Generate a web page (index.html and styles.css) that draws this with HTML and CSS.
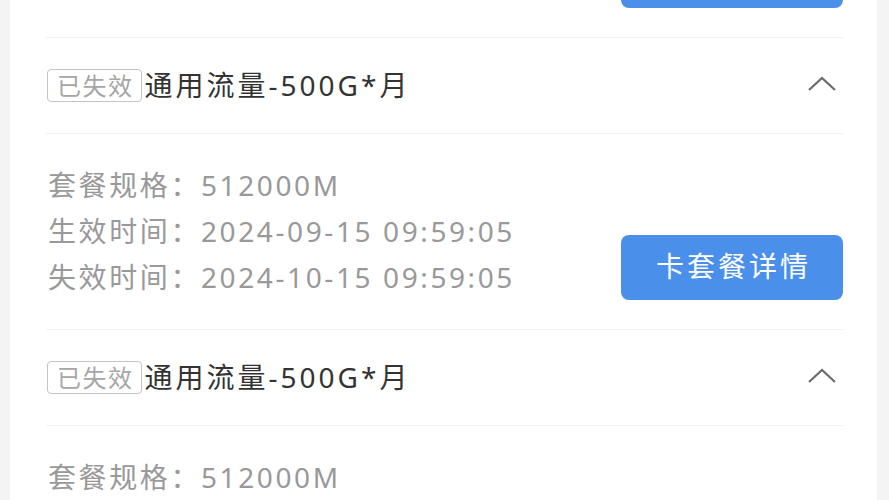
FILE: index.html
```html
<!DOCTYPE html>
<html lang="zh-CN">
<head>
    <meta charset="UTF-8">
    <meta name="viewport" content="width=device-width, initial-scale=1.0">
    <link rel="stylesheet" href="styles.css">
    <title>套餐列表</title>
</head>
<body>
  <div class="card">
    <div class="item">
      <div class="itemHead">
        <span class="badge">已失效</span>
        <span class="title">通用流量-500G*月</span>
        <svg class="arrow" width="30" height="18" viewBox="0 0 30 18"><polyline points="2,15 15,3 28,15" fill="none" stroke="#6b6b6b" stroke-width="2.2"/></svg>
      </div>
      <div class="itemBody">
        <div class="rows">
          <div class="row">套餐规格：512000M</div>
          <div class="row">生效时间：2024-08-15 09:59:05</div>
          <div class="row">失效时间：2024-09-15 09:59:05</div>
        </div>
        <a class="btn">卡套餐详情</a>
      </div>
    </div>

    <div class="item">
      <div class="itemHead">
        <span class="badge">已失效</span>
        <span class="title">通用流量-500G*月</span>
        <svg class="arrow" width="30" height="18" viewBox="0 0 30 18"><polyline points="2,15 15,3 28,15" fill="none" stroke="#6b6b6b" stroke-width="2.2"/></svg>
      </div>
      <div class="itemBody">
        <div class="rows">
          <div class="row">套餐规格：512000M</div>
          <div class="row">生效时间：2024-09-15 09:59:05</div>
          <div class="row">失效时间：2024-10-15 09:59:05</div>
        </div>
        <a class="btn">卡套餐详情</a>
      </div>
    </div>

    <div class="item">
      <div class="itemHead">
        <span class="badge">已失效</span>
        <span class="title">通用流量-500G*月</span>
        <svg class="arrow" width="30" height="18" viewBox="0 0 30 18"><polyline points="2,15 15,3 28,15" fill="none" stroke="#6b6b6b" stroke-width="2.2"/></svg>
      </div>
      <div class="itemBody">
        <div class="rows">
          <div class="row">套餐规格：512000M</div>
          <div class="row">生效时间：2024-10-15 09:59:05</div>
          <div class="row">失效时间：2024-11-15 09:59:05</div>
        </div>
        <a class="btn">卡套餐详情</a>
      </div>
    </div>
  </div>
</body>
</html>
```

FILE: styles.css
```css
body {
  margin: 0;
  background-color: #f4f4f4;
  font-family: "Noto Sans", "Noto Sans CJK SC", sans-serif;
  overflow: hidden;
}

.card {
  background-color: #fff;
  margin: -254px 12px 0 10px;
  padding: 0 34px 0 36px;
}

.itemHead {
  display: flex;
  align-items: center;
  height: 95px;
  border-bottom: 1px solid #f0f0f0;
}

.badge {
  border: 1.5px solid #c4c4c4;
  border-radius: 4px;
  color: #a6a6a6;
  font-size: 24px;
  letter-spacing: 1.5px;
  line-height: 31px;
  padding: 0 7px 0 9px;
  margin: -1px 0 0 1px;
}

.title {
  color: #333;
  font-size: 28px;
  letter-spacing: 3px;
  margin: -4px 0 0 3px;
  flex: 1;
}

.arrow {
  margin: -4px 6px 0 0;
}

.itemBody {
  display: flex;
  justify-content: space-between;
  padding: 28px 0 29px;
  border-bottom: 1px solid #f0f0f0;
}

.row {
  color: #999;
  font-size: 28px;
  letter-spacing: 2.6px;
  line-height: 46px;
  margin-left: 2px;
}

.btn {
  align-self: flex-end;
  width: 222px;
  height: 65px;
  line-height: 63px;
  text-align: center;
  text-indent: 3px;
  background-color: #4a8fea;
  color: #fff;
  font-size: 28px;
  letter-spacing: 3px;
  border-radius: 8px;
}
```
